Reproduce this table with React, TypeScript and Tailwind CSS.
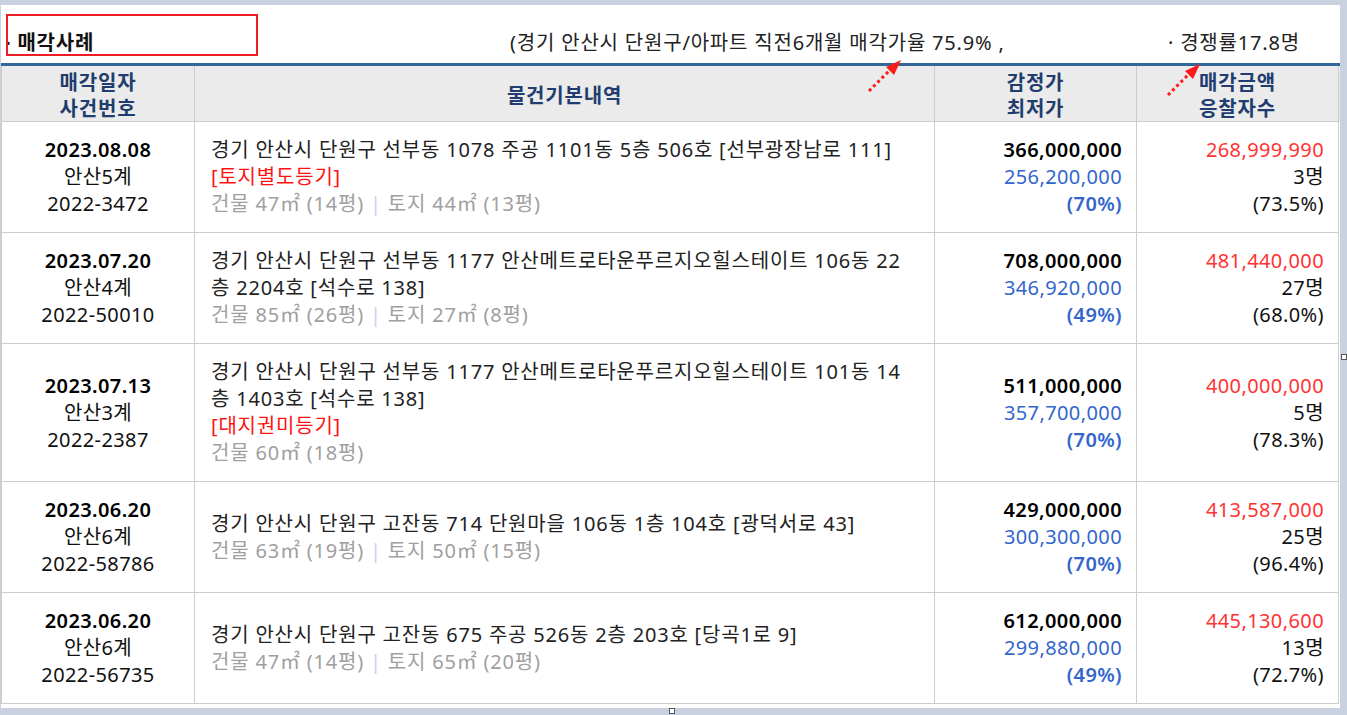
import React from 'react';

interface SaleRow {
    date: string;
    court: string;
    caseNo: string;
    address: string[];
    notice?: string;
    area: string[];
    appraisal: string;
    minimum: string;
    minRate: string;
    price: string;
    bidders: string;
    priceRate: string;
}

const rows: SaleRow[] = [
    {
        date: '2023.08.08',
        court: '안산5계',
        caseNo: '2022-3472',
        address: ['경기 안산시 단원구 선부동 1078 주공 1101동 5층 506호 [선부광장남로 111]'],
        notice: '[토지별도등기]',
        area: ['건물 47㎡ (14평)', '토지 44㎡ (13평)'],
        appraisal: '366,000,000',
        minimum: '256,200,000',
        minRate: '(70%)',
        price: '268,999,990',
        bidders: '3명',
        priceRate: '(73.5%)'
    },
    {
        date: '2023.07.20',
        court: '안산4계',
        caseNo: '2022-50010',
        address: [
            '경기 안산시 단원구 선부동 1177 안산메트로타운푸르지오힐스테이트 106동 22',
            '층 2204호 [석수로 138]'
        ],
        area: ['건물 85㎡ (26평)', '토지 27㎡ (8평)'],
        appraisal: '708,000,000',
        minimum: '346,920,000',
        minRate: '(49%)',
        price: '481,440,000',
        bidders: '27명',
        priceRate: '(68.0%)'
    },
    {
        date: '2023.07.13',
        court: '안산3계',
        caseNo: '2022-2387',
        address: [
            '경기 안산시 단원구 선부동 1177 안산메트로타운푸르지오힐스테이트 101동 14',
            '층 1403호 [석수로 138]'
        ],
        notice: '[대지권미등기]',
        area: ['건물 60㎡ (18평)'],
        appraisal: '511,000,000',
        minimum: '357,700,000',
        minRate: '(70%)',
        price: '400,000,000',
        bidders: '5명',
        priceRate: '(78.3%)'
    },
    {
        date: '2023.06.20',
        court: '안산6계',
        caseNo: '2022-58786',
        address: ['경기 안산시 단원구 고잔동 714 단원마을 106동 1층 104호 [광덕서로 43]'],
        area: ['건물 63㎡ (19평)', '토지 50㎡ (15평)'],
        appraisal: '429,000,000',
        minimum: '300,300,000',
        minRate: '(70%)',
        price: '413,587,000',
        bidders: '25명',
        priceRate: '(96.4%)'
    },
    {
        date: '2023.06.20',
        court: '안산6계',
        caseNo: '2022-56735',
        address: ['경기 안산시 단원구 고잔동 675 주공 526동 2층 203호 [당곡1로 9]'],
        area: ['건물 47㎡ (14평)', '토지 65㎡ (20평)'],
        appraisal: '612,000,000',
        minimum: '299,880,000',
        minRate: '(49%)',
        price: '445,130,600',
        bidders: '13명',
        priceRate: '(72.7%)'
    }
];

const cols = 'grid grid-cols-[194px_740px_202px_202px]';
const cell = 'border-r border-b border-[#cccccc] flex flex-col justify-center';
const body = 'pt-[14px] pb-[15px]';

const DottedArrow: React.FC<{ className: string }> = ({ className }) => (
    <svg className={className} width="40" height="40" viewBox="0 0 40 40">
        <path d="M4 34 L26 12" stroke="#ff1a1a" strokeWidth={3} strokeDasharray="3 3" />
        <polygon points="36,3 21,10 29,18" fill="#ff1a1a" />
    </svg>
);

export default function App() {
    return (
        <div
            className="relative w-[1347px] h-[715px] bg-[#c9d1e0] pt-[5px] pl-px overflow-hidden text-[#111]"
            style={{ fontFamily: '"Noto Sans", "Noto Sans CJK KR", sans-serif' }}
        >
            <div className="w-[1339px] h-[703px] bg-white">
                {/* Title bar */}
                <div className="relative h-[61px] flex items-end pb-[7px] border-b-[3px] border-[#336699] text-[20px] leading-[27px] tracking-[0.8px]">
                    <div className="absolute left-[5px] top-[9px] w-[252px] h-[42px] border-2 border-[#ee1c25]" />
                    <div className="w-[509px] pl-[4px] font-bold">· 매각사례</div>
                    <div className="w-[658px] text-[#222]">
                        (경기 안산시 단원구/아파트 직전6개월 매각가율 75.9% ,
                    </div>
                    <div className="text-[#222]">· 경쟁률17.8명</div>
                    <DottedArrow className="absolute left-[864px] top-[52px]" />
                    <DottedArrow className="absolute left-[1163px] top-[56px]" />
                </div>

                {/* Header */}
                <div className={`${cols} bg-[#ebebeb] text-[#1f3d6e] font-bold text-[20px] leading-[26px] tracking-[0.8px] text-center`}>
                    <div className={`${cell} h-[56px] pt-[4px] border-l`}>
                        <div>매각일자</div>
                        <div>사건번호</div>
                    </div>
                    <div className={`${cell} h-[56px] pt-[4px]`}>물건기본내역</div>
                    <div className={`${cell} h-[56px] pt-[4px]`}>
                        <div>감정가</div>
                        <div>최저가</div>
                    </div>
                    <div className={`${cell} h-[56px] pt-[4px]`}>
                        <div>매각금액</div>
                        <div>응찰자수</div>
                    </div>
                </div>

                {/* Body */}
                {rows.map((r, i) => (
                    <div key={i} className={`${cols} text-[20px] leading-[27px] tracking-[0.4px]`}>
                        <div className={`${cell} ${body} border-l items-center`}>
                            <div className="font-semibold text-black">{r.date}</div>
                            <div>{r.court}</div>
                            <div>{r.caseNo}</div>
                        </div>
                        <div className={`${cell} ${body} pl-[16px] tracking-[0.8px]`}>
                            {r.address.map((line, j) => (
                                <div key={j} className="whitespace-nowrap text-[#222]">{line}</div>
                            ))}
                            {r.notice && <div className="text-[#ff1111]">{r.notice}</div>}
                            <div className="text-[#a0a0a0]">
                                {r.area[0]}
                                {r.area[1] && (
                                    <>
                                        <span className="text-[#c8d4e8]"> | </span>
                                        {r.area[1]}
                                    </>
                                )}
                            </div>
                        </div>
                        <div className={`${cell} ${body} items-end pr-[14px]`}>
                            <div className="font-semibold text-black">{r.appraisal}</div>
                            <div className="text-[#3366cc]">{r.minimum}</div>
                            <div className="font-semibold text-[#3366cc]">{r.minRate}</div>
                        </div>
                        <div className={`${cell} ${body} items-end pr-[14px]`}>
                            <div className="text-[#ff3333]">{r.price}</div>
                            <div>{r.bidders}</div>
                            <div>{r.priceRate}</div>
                        </div>
                    </div>
                ))}
            </div>
            <div className="absolute left-[1341px] top-[354px] w-[6px] h-[6px] border border-[#555] bg-white" />
            <div className="absolute left-[669px] top-[708px] w-[6px] h-[6px] border border-[#555] bg-white" />
        </div>
    );
}
